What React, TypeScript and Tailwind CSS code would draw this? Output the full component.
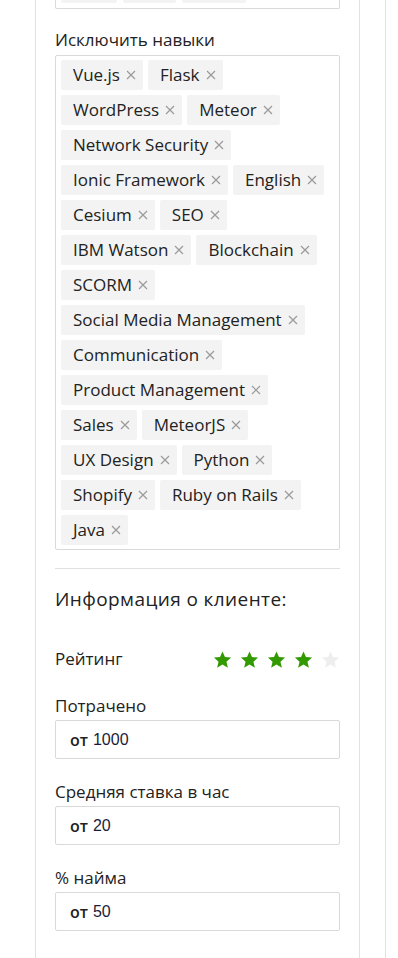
import React from "react";

const excluded = [
  "Vue.js",
  "Flask",
  "WordPress",
  "Meteor",
  "Network Security",
  "Ionic Framework",
  "English",
  "Cesium",
  "SEO",
  "IBM Watson",
  "Blockchain",
  "SCORM",
  "Social Media Management",
  "Communication",
  "Product Management",
  "Sales",
  "MeteorJS",
  "UX Design",
  "Python",
  "Shopify",
  "Ruby on Rails",
  "Java",
];

function Tag({ label }: { label: string }) {
  return (
    <span className="inline-flex h-[30px] items-center gap-[6px] rounded-[2px] bg-[#f3f3f3] pl-[12px] pr-[7px] text-[17px] text-[#222]">
      {label}
      <svg className="h-[10px] w-[10px] text-[#9a9a9a]" viewBox="0 0 10 10" fill="none" stroke="currentColor" strokeWidth={1.2}>
        <path d="M1 1l8 8M9 1L1 9" />
      </svg>
    </span>
  );
}

function Star({ filled }: { filled: boolean }) {
  return (
    <svg viewBox="0 0 24 24" className={filled ? "h-[19px] w-[19px] text-[#339900]" : "h-[19px] w-[19px] text-[#eeeeee]"} fill="currentColor">
      <path d="M12 1.8l3.1 7.1 7.7.7-5.8 5.1 1.8 7.6L12 18.3l-6.8 4 1.8-7.6-5.8-5.1 7.7-.7z" />
    </svg>
  );
}

function RangeInput({ label, value, first }: { label: string; value: string; first?: boolean }) {
  return (
    <div className={first ? "mt-[23px]" : "mt-[21px]"}>
      <div className="text-[17px] leading-[24px] text-[#222]">{label}</div>
      <div className="mt-[2px] flex h-[39px] items-center rounded-[2px] border border-[#d9d9d9] px-[14px]">
        <span className="text-[16px] font-semibold text-[#222]">от</span>
        <span className="ml-[5px] text-[16px] font-light text-[#1c1c3a] [font-family:'Liberation_Sans',sans-serif]">{value}</span>
      </div>
    </div>
  );
}

export default function App() {
  return (
    <div className="flex h-[958px] overflow-hidden bg-white [font-family:'Open_Sans',sans-serif]">
      <div className="ml-[35px] w-[325px] border-x border-[#e2e2e2] px-[19px]">
        {/* previous skills box, only bottom visible */}
        <div className="h-[9px] overflow-hidden rounded-b-[2px] border-x border-b border-[#d9d9d9] px-[5px]">
          <div className="-mt-[27px] flex gap-[6px]">
            <span className="h-[30px] w-[56px] rounded-[2px] bg-[#f3f3f3]" />
            <span className="h-[30px] w-[53px] rounded-[2px] bg-[#f3f3f3]" />
            <span className="h-[30px] w-[64px] rounded-[2px] bg-[#f3f3f3]" />
          </div>
        </div>

        <div className="mt-[20px] text-[17px] leading-[22px] text-[#222]">Исключить навыки</div>
        <div className="mt-[4px] flex flex-wrap gap-[5px] rounded-[2px] border border-[#d9d9d9] px-[5px] pb-[4px] pt-[4px]">
          {excluded.map((s) => (
            <Tag key={s} label={s} />
          ))}
        </div>

        <div className="mt-[18px] border-t border-[#e0e0e0]" />

        <div className="mt-[17px] text-[19px] font-medium leading-[26px] tracking-[0.4px] text-[#222]">Информация о клиенте:</div>

        <div className="mt-[35px] flex h-[24px] items-center justify-between">
          <span className="text-[17px] leading-[24px] text-[#222]">Рейтинг</span>
          <div className="flex gap-[8px]">
            {[1, 2, 3, 4, 5].map((i) => (
              <Star key={i} filled={i <= 4} />
            ))}
          </div>
        </div>

        <RangeInput label="Потрачено" value="1000" first />
        <RangeInput label="Средняя ставка в час" value="20" />
        <RangeInput label="% найма" value="50" />
        <div className="mt-[21px] text-[17px] leading-[24px] text-[#222]">Страна</div>
      </div>
      <div className="ml-[25px] border-l border-[#e2e2e2]" />
    </div>
  );
}
